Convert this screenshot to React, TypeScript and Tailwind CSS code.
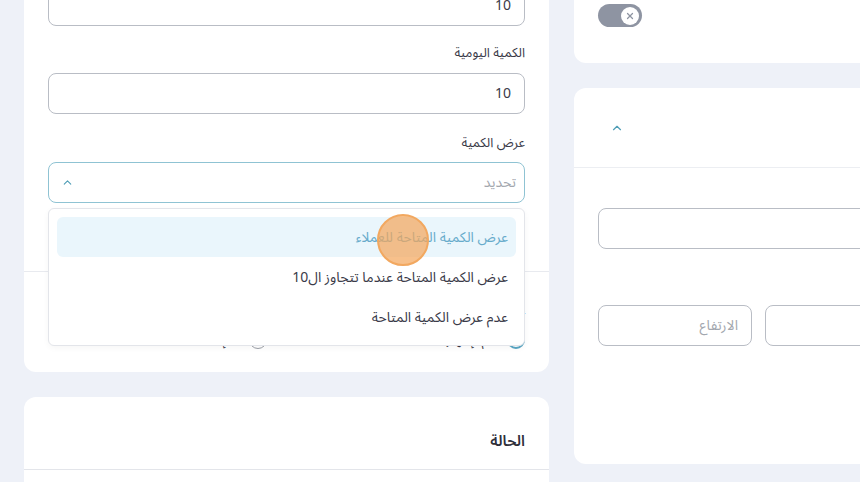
import { ChevronUp, X } from "lucide-react";

const font = "font-['Noto_Sans_Arabic','Noto_Sans','DejaVu_Sans',sans-serif]";

function Field({ value, placeholder }: { value?: string; placeholder?: string }) {
  return (
    <div className="h-[41px] rounded-lg border border-[#b9bdc5] bg-white px-[13px] flex items-center text-[14px]">
      {value ? (
        <span className="text-[#3a3a48]">{value}</span>
      ) : (
        <span className="text-[#a3a7ae]">{placeholder}</span>
      )}
    </div>
  );
}

const options = [
  "عرض الكمية المتاحة للعملاء",
  "عرض الكمية المتاحة عندما تتجاوز ال10",
  "عدم عرض الكمية المتاحة",
];

export default function App() {
  return (
    <div className={`${font} w-[860px] h-[482px] overflow-hidden bg-[#eef1f8] flex gap-[25px] pl-[24px]`}>
      {/* left column */}
      <div className="w-[525px] shrink-0 -mt-[40px] flex flex-col gap-[25px]" dir="rtl">
        <div className="bg-white rounded-xl">
          <div className="px-[24px] pt-[25px] pb-[68px]">
            <Field value="10" />
            <p className="mt-[17px] mb-[10px] text-[13px] leading-[20px] text-[#3a3a48]">الكمية اليومية</p>
            <Field value="10" />
            <p className="mt-[19px] mb-[9px] text-[13px] leading-[20px] text-[#3a3a48]">عرض الكمية</p>
            <div className="relative">
              <div className="h-[41px] rounded-lg border border-[#8fc3d3] bg-white pr-[8px] pl-[12px] flex items-center justify-between text-[14px]">
                <span className="text-[#a3a7ae]">تحديد</span>
                <ChevronUp className="w-[13px] h-[13px] text-[#4f9db6]" strokeWidth={2} />
              </div>
              {/* open menu */}
              <div className="absolute top-[46px] inset-x-0 z-10 bg-white border border-[#e3e5ea] rounded-md p-[8px] shadow-[0_2px_6px_rgba(0,0,0,0.04)]">
                {options.map((o, i) => (
                  <div
                    key={o}
                    className={`relative h-[40px] flex items-center px-[8px] rounded-md text-[14px] ${
                      i === 0 ? "bg-[#eaf6fc] text-[#67abcb]" : "text-[#3a3a48]"
                    }`}
                  >
                    {o}
                    {i === 0 && (
                      <span className="absolute left-[320px] top-[-3px] w-[52px] h-[52px] rounded-full bg-[#f4a55a]/70 border-2 border-[#f2a860]" />
                    )}
                  </div>
                ))}
              </div>
            </div>
          </div>
          <div className="border-t border-[#e8eaef] px-[24px] pt-[24px] pb-[22px]">
            <p className="text-[13px] leading-[20px] text-[#3a3a48]">إظهار الكمية</p>
            <div className="mt-[14px] flex items-center gap-[180px] text-[13px] leading-[20px] text-[#3a3a48]">
              <label className="flex items-center gap-[8px]">
                <span className="w-[18px] h-[18px] rounded-full border-2 border-[#5aa7c4]" />
                نعم، إظهار
              </label>
              <label className="flex items-center gap-[8px]">
                <span className="w-[18px] h-[18px] rounded-full border border-[#9a9ea6]" />
                لا، إخفاء
              </label>
            </div>
          </div>
        </div>
        <div className="bg-white rounded-xl">
          <div className="px-[24px] pt-[34px] pb-[18px] border-b border-[#e3e5ea]">
            <h3 className="text-[15px] leading-[20px] font-semibold text-[#2f2f3a]">الحالة</h3>
          </div>
          <div className="h-[80px]" />
        </div>
      </div>

      {/* right column */}
      <div className="w-[536px] shrink-0 -mt-[40px] flex flex-col gap-[25px]" dir="rtl">
        <div className="bg-white rounded-xl px-[24px] pt-[44px] pb-[36px]">
          <div className="flex items-center justify-between h-[23px]">
            <span className="text-[14px] text-[#3a3a48]">تفعيل</span>
            <div className="w-[44px] h-[23px] rounded-full bg-[#8e94a2] flex items-center pr-[3px]">
              <span className="w-[18px] h-[18px] rounded-full bg-white flex items-center justify-center">
                <X className="w-[10px] h-[10px] text-[#8e94a2]" strokeWidth={3} />
              </span>
            </div>
          </div>
        </div>
        <div className="bg-white rounded-xl">
          <div className="h-[80px] flex items-center justify-between pr-[24px] pl-[36px] border-b border-[#eceef2]">
            <span className="text-[15px] font-semibold text-[#2f2f3a]">الأبعاد</span>
            <ChevronUp className="w-[14px] h-[14px] text-[#4f9db6]" strokeWidth={2} />
          </div>
          <div className="px-[24px] pt-[10px] pb-[118px]">
            <p className="mb-[10px] text-[13px] leading-[20px] text-[#3a3a48]">الوزن</p>
            <Field />
            <p className="mt-[26px] mb-[10px] text-[13px] leading-[20px] text-[#3a3a48]">الأبعاد</p>
            <div className="grid grid-cols-3 gap-[13px]">
              <Field placeholder="الطول" />
              <Field placeholder="العرض" />
              <Field placeholder="الارتفاع" />
            </div>
          </div>
        </div>
      </div>
    </div>
  );
}
